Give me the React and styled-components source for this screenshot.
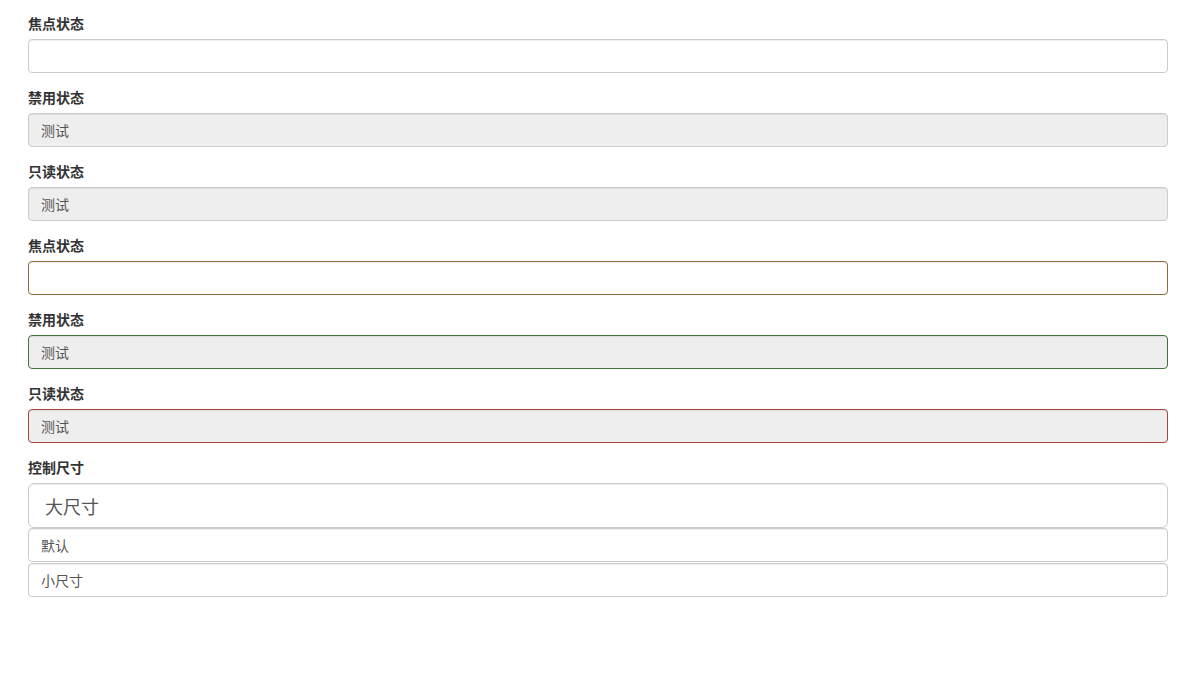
import React from "react";
import styled, { createGlobalStyle } from "styled-components";

const GlobalStyle = createGlobalStyle`
  html, body {
    margin: 0;
    padding: 0;
    background: #fff;
  }
  body {
    font-family: "Liberation Sans", Arial, "Noto Sans CJK SC", sans-serif;
    font-size: 14px;
    line-height: 1.42857143;
    color: #333;
  }
`;

const borderColors = {
  warning: "#8a6d3b",
  success: "#3c763d",
  error: "#a94442",
};

const Container = styled.form`
  width: 1140px;
  padding: 14px 0 0 28px;
`;

const Group = styled.div`
  margin-bottom: 15px;
`;

const Label = styled.label`
  display: block;
  margin-bottom: 5px;
  font-weight: bold;
  font-size: 14px;
  line-height: 20px;
  color: #333;
`;

const Input = styled.input`
  display: block;
  box-sizing: border-box;
  width: 100%;
  height: ${(p) => (p.$size === "lg" ? "45px" : "34px")};
  padding: ${(p) => (p.$size === "lg" ? "10px 16px" : "6px 12px")};
  margin: ${(p) => (p.$size === "sm" ? "1px 0 0" : "0")};
  font-family: inherit;
  font-size: ${(p) => (p.$size === "lg" ? "18px" : "14px")};
  line-height: 1.42857143;
  color: #555;
  background: ${(p) => (p.disabled || p.readOnly ? "#eee" : "#fff")};
  border: 1px solid ${(p) => borderColors[p.$state] || "#ccc"};
  border-radius: ${(p) => (p.$size === "lg" ? "6px" : "4px")};
  box-shadow: inset 0 1px 1px rgba(0, 0, 0, 0.075);
  outline: none;
`;

const SizeStack = styled.div`
  display: flex;
  flex-direction: column;
`;

function App() {
  return (
    <>
      <GlobalStyle />
      <Container>
        <Group>
          <Label>焦点状态</Label>
          <Input type="text" />
        </Group>
        <Group>
          <Label>禁用状态</Label>
          <Input type="text" disabled defaultValue="测试" />
        </Group>
        <Group>
          <Label>只读状态</Label>
          <Input type="text" readOnly defaultValue="测试" />
        </Group>
        <Group>
          <Label>焦点状态</Label>
          <Input type="text" $state="warning" />
        </Group>
        <Group>
          <Label>禁用状态</Label>
          <Input type="text" $state="success" disabled defaultValue="测试" />
        </Group>
        <Group>
          <Label>只读状态</Label>
          <Input type="text" $state="error" readOnly defaultValue="测试" />
        </Group>
        <Group>
          <Label>控制尺寸</Label>
          <SizeStack>
            <Input type="text" $size="lg" defaultValue="大尺寸" />
            <Input type="text" defaultValue="默认" />
            <Input type="text" $size="sm" defaultValue="小尺寸" />
          </SizeStack>
        </Group>
      </Container>
    </>
  );
}

export default App;
